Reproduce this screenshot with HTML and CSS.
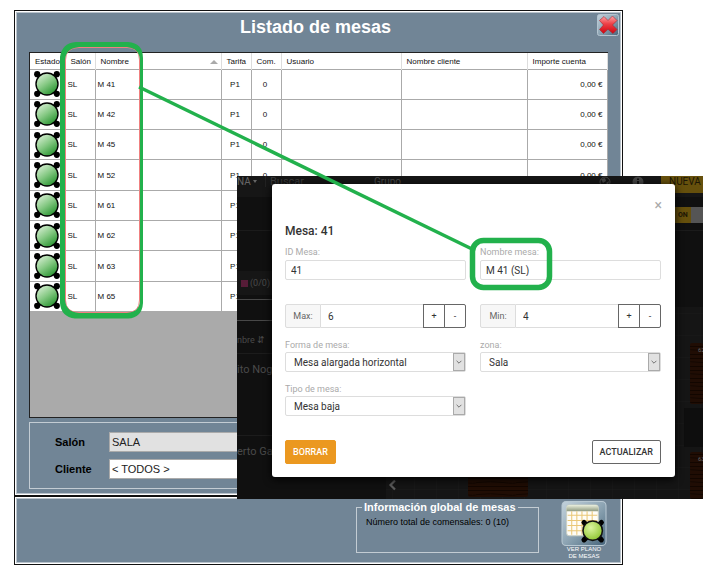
FILE: index.html
```
<!DOCTYPE html>
<html lang="es">
  <head>
    <meta charset="UTF-8" />
    <meta name="viewport" content="width=device-width, initial-scale=1.0" />
    <title>Listado de mesas</title>
    <link rel="stylesheet" href="styles.css">
  </head>
  <body>
    <!-- table icon used in every row -->
    <svg class="defs" width="0" height="0">
      <defs>
        <linearGradient id="green" x1="0.1" y1="0" x2="0.8" y2="1">
          <stop offset="0" stop-color="#e4f5e0" />
          <stop offset="0.5" stop-color="#86c984" />
          <stop offset="1" stop-color="#1f8f28" />
        </linearGradient>
        <linearGradient id="glass" x1="0" y1="0" x2="1" y2="1">
          <stop offset="0" stop-color="#c3d2dc" />
          <stop offset="0.5" stop-color="#8ea5b4" />
          <stop offset="1" stop-color="#46647a" />
        </linearGradient>
        <linearGradient id="red" x1="0" y1="0" x2="0" y2="1">
          <stop offset="0" stop-color="#ffa6a8" />
          <stop offset="0.45" stop-color="#ee4046" />
          <stop offset="1" stop-color="#cf0510" />
        </linearGradient>
        <radialGradient id="lime" cx="0.4" cy="0.35" r="0.7">
          <stop offset="0" stop-color="#dcf5a0" />
          <stop offset="1" stop-color="#8cc42e" />
        </radialGradient>
        <linearGradient id="olive" x1="0" y1="0" x2="0" y2="1">
          <stop offset="0" stop-color="#e9eedc" />
          <stop offset="1" stop-color="#8f9a80" />
        </linearGradient>
        <symbol id="table-icon" viewBox="0 0 26 26">
          <path d="M3 3L23 23M23 3L3 23" stroke="#000" stroke-width="4" />
          <circle cx="3.2" cy="3.2" r="3.1" />
          <circle cx="22.8" cy="3.2" r="3.1" />
          <circle cx="3.2" cy="22.8" r="3.1" />
          <circle cx="22.8" cy="22.8" r="3.1" />
          <circle cx="13" cy="13" r="11" fill="url(#green)" stroke="#000" stroke-width="1.4" />
        </symbol>
      </defs>
    </svg>

    <!-- main window -->
    <main class="window">
      <header class="window-header">
        <h1>Listado de mesas</h1>
        <button class="close-button" aria-label="Cerrar">
          <svg viewBox="0 0 22 22">
            <rect x="0.5" y="0.5" width="21" height="21" rx="2" fill="url(#glass)" stroke="#b4c4cf" />
            <path d="M7 2.500L11 6.500L15.500 2L20 6.500L15.500 11L20 15.500L16 19.500L11 15.300L6.500 19.500L2.500 15.500L6.500 11L2.500 6.500Z" fill="url(#red)" stroke="#a3232b" stroke-width="0.6" />
          </svg>
        </button>
      </header>

      <div class="grid-frame">
        <table class="grid">
          <colgroup>
            <col class="col-estado" />
            <col class="col-salon" />
            <col class="col-nombre" />
            <col class="col-tarifa" />
            <col class="col-com" />
            <col class="col-usuario" />
            <col class="col-cliente" />
            <col class="col-importe" />
          </colgroup>
          <thead>
            <tr>
              <th>Estado</th>
              <th>Salón</th>
              <th><span class="sorted">Nombre</span></th>
              <th>Tarifa</th>
              <th>Com.</th>
              <th>Usuario</th>
              <th>Nombre cliente</th>
              <th>Importe cuenta</th>
            </tr>
          </thead>
          <tbody>
            <tr><td class="state"><svg><use href="#table-icon" /></svg></td><td>SL</td><td>M 41</td><td class="center">P1</td><td class="center">0</td><td></td><td></td><td class="amount">0,00 €</td></tr>
            <tr><td class="state"><svg><use href="#table-icon" /></svg></td><td>SL</td><td>M 42</td><td class="center">P1</td><td class="center">0</td><td></td><td></td><td class="amount">0,00 €</td></tr>
            <tr><td class="state"><svg><use href="#table-icon" /></svg></td><td>SL</td><td>M 45</td><td class="center">P1</td><td class="center">0</td><td></td><td></td><td class="amount">0,00 €</td></tr>
            <tr><td class="state"><svg><use href="#table-icon" /></svg></td><td>SL</td><td>M 52</td><td class="center">P1</td><td class="center">0</td><td></td><td></td><td class="amount">0,00 €</td></tr>
            <tr><td class="state"><svg><use href="#table-icon" /></svg></td><td>SL</td><td>M 61</td><td class="center">P1</td><td class="center"></td><td></td><td></td><td></td></tr>
            <tr><td class="state"><svg><use href="#table-icon" /></svg></td><td>SL</td><td>M 62</td><td class="center">P1</td><td class="center"></td><td></td><td></td><td></td></tr>
            <tr><td class="state"><svg><use href="#table-icon" /></svg></td><td>SL</td><td>M 63</td><td class="center">P1</td><td class="center"></td><td></td><td></td><td></td></tr>
            <tr><td class="state"><svg><use href="#table-icon" /></svg></td><td>SL</td><td>M 65</td><td class="center">P1</td><td class="center"></td><td></td><td></td><td></td></tr>
          </tbody>
        </table>
      </div>

      <!-- filters -->
      <div class="filters">
        <label for="salon">Salón</label>
        <select id="salon" class="filter-salon"><option>SALA</option></select>
        <label for="cliente">Cliente</label>
        <select id="cliente"><option>&lt; TODOS &gt;</option></select>
      </div>
    </main>

    <!-- bottom bar -->
    <footer class="window bottom-bar">
      <fieldset class="summary">
        <legend>Información global de mesas</legend>
        <p>Número total de comensales: 0 (10)</p>
      </fieldset>
      <button class="plan-button">
        <svg viewBox="0 0 44 44">
          <rect x="0.500" y="0.500" width="43" height="43" rx="4" fill="url(#glass)" stroke="#b9c9d3" />
          <rect x="5" y="4" width="31" height="30" rx="3" fill="#fffdf6" stroke="#c9cfc4" />
          <path d="M5 10V7a3 3 0 0 1 3-3h25a3 3 0 0 1 3 3v3z" fill="url(#olive)" />
          <path d="M10 10V33M15 10V33M20 10V33M25 10V33M30 10V33M6 14H35M6 19H35M6 24H35M6 29H35" stroke="#eac777" stroke-width="1" />
          <path d="M22 21L39 38M39 21L22 38" stroke="#000" stroke-width="5" stroke-linecap="round" />
          <circle cx="30.500" cy="29" r="9.500" fill="url(#lime)" stroke="#111" stroke-width="1.500" />
        </svg>
        <span>VER PLANO<br />DE MESAS</span>
      </button>
    </footer>

    <!-- web app with the edit dialog opened -->
    <section class="webapp">
      <div class="backdrop" aria-hidden="true">
        <svg class="floor" viewBox="0 0 466 323" preserveAspectRatio="xMaxYMin slice">
          <defs>
            <pattern id="tiles" width="22" height="22" patternUnits="userSpaceOnUse" x="441" y="5">
              <path d="M0 0H22M0 0V22" stroke="#1c1c1c" fill="none" />
            </pattern>
            <pattern id="wood" width="40" height="12" patternUnits="userSpaceOnUse">
              <rect width="40" height="12" fill="#200d04" />
              <path d="M0 2.500H40M0 6.500Q14 5 26 6.500T40 6.500M0 10.500H40" stroke="#120600" fill="none" />
            </pattern>
          </defs>
          <rect x="149" y="131" width="317" height="192" fill="#151515" />
          <rect x="149" y="131" width="317" height="192" fill="url(#tiles)" />
          <path d="M35 54.500H466" stroke="#1b1b1b" />
          <rect x="231" y="290" width="60" height="31" rx="2" fill="url(#wood)" />
          <rect x="447" y="232" width="19" height="39" fill="#0e0e0e" />
          <rect x="453" y="167" width="13" height="61" rx="2" fill="url(#wood)" />
          <rect x="453" y="276" width="13" height="47" rx="2" fill="url(#wood)" />
          <text x="461" y="176">62</text>
          <text x="461" y="285">63</text>
          <path d="M158 304.500L153.500 309L158 313.500" fill="none" stroke="#5a5a5a" stroke-width="2.200" />
        </svg>
        <div class="topbar">
          <span class="menu">NA <i></i></span>
          <span class="search">Buscar</span>
          <span class="group">Grupo</span>
          <svg class="bar-icon" viewBox="0 0 12 12"><circle cx="6" cy="6" r="5" fill="none" stroke="#444" /><path d="M2 3L6 2L7 5L4 7ZM7 7L10 5L9 9Z" fill="#444" /></svg>
          <svg class="bar-icon info" viewBox="0 0 12 12"><circle cx="6" cy="6" r="5.500" fill="#444" /><path d="M6 2.500V4M6 5V9.500" stroke="#111" stroke-width="2" /></svg>
          <span class="new">NUEVA RESERVA</span>
        </div>
        <div class="switch"><b>ON</b><i></i></div>
        <div class="sidebar">
          <div class="side-gap"></div>
          <div class="side-count"><i></i>(0/0)</div>
          <div class="side-search"></div>
          <div class="side-sort">nbre ⇵</div>
          <div class="side-item">ito Nogales</div>
          <div class="side-item">erto Garc</div>
        </div>
      </div>

      <!-- edit dialog -->
      <form class="dialog">
        <button type="button" class="dialog-close" aria-label="Cerrar">×</button>
        <h2>Mesa: 41</h2>
        <div class="fields">
          <div class="field">
            <label for="idMesa">ID Mesa:</label>
            <input id="idMesa" type="text" value="41" />
          </div>
          <div class="field">
            <label for="nombreMesa">Nombre mesa:</label>
            <input id="nombreMesa" type="text" value="M 41 (SL)" />
          </div>
          <div class="stepper">
            <label for="max">Max:</label>
            <input id="max" type="text" value="6" />
            <button type="button">+</button>
            <button type="button">-</button>
          </div>
          <div class="stepper">
            <label for="min">Min:</label>
            <input id="min" type="text" value="4" />
            <button type="button">+</button>
            <button type="button">-</button>
          </div>
          <div class="field">
            <label for="forma">Forma de mesa:</label>
            <div class="select">
              <select id="forma"><option>Mesa alargada horizontal</option></select>
              <svg viewBox="0 0 12 20"><path d="M3 8.500L6 11.500L9 8.500" /></svg>
            </div>
          </div>
          <div class="field">
            <label for="zona">zona:</label>
            <div class="select">
              <select id="zona"><option>Sala</option></select>
              <svg viewBox="0 0 12 20"><path d="M3 8.500L6 11.500L9 8.500" /></svg>
            </div>
          </div>
          <div class="field">
            <label for="tipo">Tipo de mesa:</label>
            <div class="select">
              <select id="tipo"><option>Mesa baja</option></select>
              <svg viewBox="0 0 12 20"><path d="M3 8.500L6 11.500L9 8.500" /></svg>
            </div>
          </div>
        </div>
        <div class="actions">
          <button type="button" class="delete">BORRAR</button>
          <button type="button" class="update">ACTUALIZAR</button>
        </div>
      </form>
    </section>

    <!-- green marks that join both names -->
    <svg class="marks" viewBox="0 0 721 575">
      <path d="M79 47.500H127Q139.500 47.500 139.500 60V300Q139.500 312.500 127 312.500H79Q65.500 312.500 65.500 300V60Q65.500 47.500 79 47.500Z" fill="none" stroke="#f08080" stroke-width="1" />
      <path fill="#22b14c" fill-rule="evenodd" d="M76 42H128Q143 43 143 58V303Q142 318 128 318.500H75Q61 317 60 303V57Q62 43 76 42ZM79 47Q66 48 65 60V300Q66 312 79 313H127Q140 312 140 300V60Q139 48 127 47Z" />
      <path d="M139 87L472 249" stroke="#22b14c" stroke-width="3.500" />
      <rect x="472.500" y="240.500" width="77" height="47" rx="11" fill="none" stroke="#22b14c" stroke-width="5.500" />
    </svg>
  </body>
</html>
```

FILE: styles.css
```
/* reset */
* {
  margin: 0;
  padding: 0;
  box-sizing: border-box;
}
body {
  position: relative;
  padding: 10px 98px 10px 14px;
  background-color: #fff;
  font-family: "Liberation Sans", Arial, sans-serif;
  overflow-x: hidden;
}
button,
input,
select {
  font-family: inherit;
  appearance: none;
}
.defs {
  position: absolute;
}

/* windows with the blue background */
.window {
  border: 1px solid #111;
  background-color: #718596;
  box-shadow: inset 0 0 0 1px #fff, inset 0 0 0 2px #b9c3cc;
}
.window-header {
  display: grid;
  grid-template-columns: 16px 1fr 22px;
  align-items: start;
  height: 41px;
  padding: 3px;
}
.window-header h1 {
  grid-column: 2;
  color: #fff;
  font-size: 18px;
  line-height: 26px;
  text-align: center;
}
.close-button {
  border: none;
  background: none;
  height: 22px;
}
.close-button svg {
  display: block;
  width: 22px;
  height: 22px;
}

/* list of tables */
.grid-frame {
  min-height: 366px;
  margin: 0 14px;
  border: 1px solid #222;
  background-color: #aaa;
}
.grid {
  width: 100%;
  height: 259px;
  table-layout: fixed;
  border-collapse: collapse;
  background-color: #fff;
  color: #111;
  font-size: 8px;
}
.col-estado {
  width: 35px;
}
.col-salon,
.col-tarifa,
.col-com {
  width: 30px;
}
.col-nombre,
.col-cliente {
  width: 126px;
}
.col-usuario {
  width: 120px;
}
.col-importe {
  width: 80px;
}
.grid th {
  height: 16px;
  padding: 2px 0 0 5px;
  border-right: 1px solid #ddd;
  font-weight: normal;
  text-align: left;
  white-space: nowrap;
}
.sorted {
  display: flex;
  align-items: center;
  justify-content: space-between;
  padding-right: 3px;
}
.sorted::after {
  content: "";
  border: 4px solid transparent;
  border-top: none;
  border-bottom: 4px solid #aaa;
}
.grid td {
  padding: 0 4px 0 2px;
  border: 1px solid #aaa;
  border-left: none;
}
.grid .state {
  padding: 0 0 0 4px;
}
.state svg {
  display: block;
  width: 26px;
  height: 26px;
}
.grid .center {
  text-align: center;
}
.grid .amount {
  text-align: right;
}

/* filters */
.filters {
  display: grid;
  grid-template-columns: 54px 1fr;
  gap: 7px 0;
  align-items: center;
  margin: 4px 14px 6px;
  padding: 9px 25px;
  border: 1px solid #c3ccd3;
}
.filters label {
  font-size: 11px;
  font-weight: bold;
}
.filters select {
  height: 20px;
  padding: 0 2px;
  border: 1px solid #aaa;
  border-radius: 0;
  background-color: #fff;
  color: #222;
  font-size: 11px;
}
.filters .filter-salon {
  background-color: #e1e1e1;
}

/* bottom bar */
.bottom-bar {
  display: flex;
  justify-content: flex-end;
  gap: 22px;
  padding: 4px 15px 4px;
}
.summary {
  width: 183px;
  height: 52px;
  border: 1px solid #c3ccd3;
}
.summary legend {
  margin-left: 5px;
  padding: 0 2px;
  color: #fff;
  font-size: 11px;
  font-weight: bold;
  line-height: 12px;
}
.summary p {
  padding: 4px 9px;
  font-size: 9px;
  line-height: 10px;
  white-space: nowrap;
}
.plan-button {
  border: none;
  background: none;
  color: #fff;
  font-size: 6px;
  line-height: 7px;
}
.plan-button svg {
  display: block;
  width: 46px;
  height: 45px;
}

/* web app on top of the list */
.webapp {
  position: absolute;
  top: 176px;
  left: 237px;
  right: 18px;
  padding: 8px 28px 22px 35px;
  background-color: #101010;
  font-family: Roboto, sans-serif;
}
.backdrop {
  position: absolute;
  inset: 0;
  overflow: hidden;
  color: #4a4a4a;
  font-size: 10px;
}
.floor {
  position: absolute;
  width: 100%;
  height: 100%;
}
.floor text {
  fill: #666;
  font-size: 6px;
}
.topbar {
  position: relative;
  display: flex;
  align-items: flex-start;
  height: 21px;
  background-color: #161616;
  line-height: 11px;
  white-space: nowrap;
}
.menu {
  width: 28px;
  color: #666;
}
.menu i {
  display: inline-block;
  border: 2px solid transparent;
  border-top: 3px solid #666;
}
.search {
  width: 92px;
  padding-left: 4px;
  border-left: 1px solid #222;
  color: #3c3c3c;
  font-size: 11px;
}
.group {
  flex: 1;
  padding-left: 17px;
}
.bar-icon {
  width: 12px;
  height: 12px;
  margin-right: 21px;
}
.info {
  margin-right: 17px;
}
.new {
  width: 42px;
  height: 17px;
  padding-left: 8px;
  overflow: hidden;
  background-color: #66500c;
  color: #1c1605;
}
.switch {
  position: absolute;
  top: 31px;
  right: 0;
  display: flex;
  width: 28px;
  height: 16px;
  background-color: #66500c;
  color: #1c1605;
  font-size: 7px;
  line-height: 16px;
}
.switch b {
  width: 16px;
  padding-left: 3px;
}
.switch i {
  flex: 1;
  background-color: #555;
}
.sidebar {
  position: relative;
  display: flex;
  flex-direction: column;
  width: 35px;
  white-space: nowrap;
  overflow: hidden;
}
.side-gap {
  height: 74px;
  background: linear-gradient(#1b1b1b, #1b1b1b) 0 33px / 100% 1px no-repeat;
}
.side-count {
  display: flex;
  align-items: center;
  gap: 2px;
  height: 24px;
  padding-left: 4px;
  background-color: #161616;
  font-size: 9px;
}
.side-count i {
  width: 7px;
  height: 7px;
  background-color: #561c37;
}
.side-search {
  height: 22px;
  margin-top: 4px;
  border: 1px solid #484848;
  border-width: 1px 0;
}
.side-sort {
  height: 33px;
  border-bottom: 1px solid #1c1c1c;
  font-size: 9px;
  line-height: 38px;
}
.side-item {
  height: 82px;
  border-bottom: 1px solid #1c1c1c;
  font-size: 11px;
  line-height: 32px;
}

/* dialog */
.dialog {
  position: relative;
  padding: 38px 14px 13px 13px;
  border-radius: 3px;
  background-color: #fff;
  box-shadow: 0 2px 8px #000;
  color: #333;
}
.dialog-close {
  position: absolute;
  top: 13px;
  right: 13px;
  border: none;
  background: none;
  color: #aaa;
  font-size: 14px;
  line-height: 16px;
}
.dialog h2 {
  font-size: 12px;
  font-weight: 500;
  line-height: 18px;
}
.fields {
  display: grid;
  grid-template-columns: repeat(2, minmax(0, 1fr));
  gap: 0 14px;
  padding-top: 7px;
}
.field label {
  display: block;
  color: #aaa;
  font-size: 9px;
  line-height: 10px;
}
.field input {
  display: block;
  width: 100%;
  height: 20px;
  margin-top: 3px;
  padding: 0 5px;
  border: 1px solid #ddd;
  border-radius: 2px;
  color: #333;
  font-size: 10px;
}
.stepper {
  display: flex;
  height: 24px;
  margin: 24px 0 12px;
}
.stepper label {
  width: 36px;
  border: 1px solid #ddd;
  border-radius: 2px 0 0 2px;
  background-color: #f7f7f7;
  color: #666;
  font-size: 9px;
  line-height: 22px;
  text-align: center;
}
.stepper input {
  flex: 1;
  min-width: 0;
  padding: 0 7px;
  border: 1px solid #ddd;
  border-width: 1px 0;
  color: #333;
  font-size: 10px;
}
.stepper button {
  width: 22px;
  border: 1px solid #666;
  background-color: #fff;
  color: #333;
  font-size: 9px;
}
.stepper button:last-child {
  margin-left: -1px;
  border-radius: 0 2px 2px 0;
}
.select {
  display: flex;
  height: 20px;
  margin: 2px 0 12px;
  border: 1px solid #ddd;
  border-radius: 2px;
}
.select select {
  flex: 1;
  min-width: 0;
  padding: 0 8px;
  border: none;
  background: none;
  color: #333;
  font-size: 10px;
}
.select svg {
  width: 12px;
  border: 1px solid #aaa;
  background-color: #e1e1e1;
}
.select path {
  fill: none;
  stroke: #555;
}
.actions {
  display: flex;
  justify-content: space-between;
  padding-top: 12px;
}
.actions button {
  height: 24px;
  padding: 0 7px;
  border: 1px solid #666;
  border-radius: 2px;
  background-color: #fff;
  color: #333;
  font-size: 9px;
  font-weight: 500;
}
.actions .delete {
  border-color: #eb9820;
  background-color: #eb9820;
  color: #fff;
}

/* annotation */
.marks {
  position: absolute;
  top: 0;
  left: 0;
  width: 721px;
  height: 575px;
  pointer-events: none;
}
```
